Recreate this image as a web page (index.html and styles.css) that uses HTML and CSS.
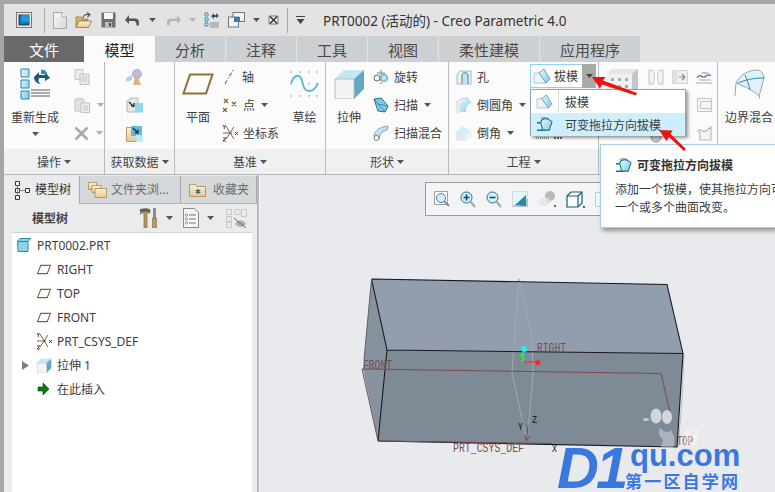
FILE: index.html
```html
<!DOCTYPE html>
<html lang="zh">
<head>
<meta charset="utf-8">
<title>PRT0002 - Creo Parametric 4.0</title>
<link rel="stylesheet" href="styles.css">
</head>
<body>
<svg class="defs" width="0" height="0" aria-hidden="true">
  <defs>
    <linearGradient id="gBlue" x1="0" y1="0" x2="1" y2="1"><stop offset="0" stop-color="#e8f7fc"/><stop offset="1" stop-color="#7ccbe6"/></linearGradient>
    <linearGradient id="gGrey" x1="0" y1="0" x2="1" y2="1"><stop offset="0" stop-color="#fafafa"/><stop offset="1" stop-color="#d4d6d8"/></linearGradient>
    <linearGradient id="gFolder" x1="0" y1="0" x2="0" y2="1"><stop offset="0" stop-color="#fdf2d4"/><stop offset="1" stop-color="#e8c98a"/></linearGradient>
    <symbol id="arrow" viewBox="0 0 9 5"><path d="M0 0h9L4.500 5z"/></symbol>
    <symbol id="plane" viewBox="0 0 16 12"><path d="M4.500 1.500H15L11.500 10.500H1z" fill="none" stroke="#7a6236" stroke-width="1.200"/></symbol>
    <symbol id="csys" viewBox="0 0 16 18">
      <path d="M4 2l8 13M12 3L4 15M1 9h9" stroke="#7a6236" stroke-width="1" fill="none"/>
      <path d="M1 1l1.300 2L3.600 1M2.300 3v2M13 8l3 3M16 8l-3 3M1 14h3l-3 3h3" stroke="#333" stroke-width=".9" fill="none"/>
    </symbol>
    <symbol id="extrude" viewBox="0 0 30 30">
      <path d="M10 1h20L20 10H1z" fill="#c5e6f3"/><path d="M30 1v19l-10 10V10z" fill="#5fa9c6"/>
      <path d="M1 10h19v20H1z" fill="#f3f3f3" stroke="#b8bcbe"/>
    </symbol>
    <symbol id="draft" viewBox="0 0 18 16">
      <path d="M1 5h9l3 10H1z" fill="#e9f6fb" stroke="#9fb7c2" stroke-width=".8"/>
      <path d="M6 5l5-4 6 10-4 4z" fill="url(#gBlue)" stroke="#5b8ba0" stroke-width=".8"/>
    </symbol>
    <symbol id="vdraft" viewBox="0 0 18 16">
      <path d="M1 6h6M1 14h9" stroke="#1c6f8f" stroke-width="1.600" fill="none"/>
      <path d="M5 6c0-4 6-5 9-3l3 2-3 9H7z" fill="url(#gBlue)" stroke="#1c6f8f" stroke-width="1.100"/>
      <path d="M5 1.500c3-1 7-1 9 1" stroke="#555" fill="none" stroke-width=".8"/>
    </symbol>
  </defs>
</svg>

<div class="app">
  <header class="titlebar">
    <svg class="qa-app" width="16" height="16" viewBox="0 0 16 16"><rect x=".5" y=".5" width="15" height="15" fill="#f0f0f0" stroke="#777"/><rect x="3" y="3" width="10" height="10" fill="#0c78c2" stroke="#333"/><rect x="5.500" y="3" width="7.500" height="7" fill="#1d9be0"/></svg>
    <span class="qa-sep first"></span>
    <svg width="14" height="17" viewBox="0 0 14 17"><path d="M.5.500h8.500l4.500 4.500v11.500H.5z" fill="url(#gGrey)" stroke="#a3a8ab"/><path d="M9 .5v4.500h4.500" fill="#fff" stroke="#a3a8ab"/></svg>
    <svg width="17" height="17" viewBox="0 0 17 17"><path d="M1 15V5h5l1 2h6v2H4L1 15z" fill="#d8b56c" stroke="#93763c" stroke-width=".8"/><path d="M1 15l3-6h12.500l-3 6.500H1z" fill="url(#gFolder)" stroke="#93763c" stroke-width=".8"/><path d="M8 6c0-3 3-4 6-3.500M12 .5l3 2-2.500 2.500" fill="none" stroke="#44606f" stroke-width="1.200"/></svg>
    <svg class="qa-save" width="15" height="16" viewBox="0 0 15 16"><path d="M.5.500h14v15H.5z" fill="#6b7074"/><path d="M3 1h9v6H3z" fill="#f6f6f6"/><path d="M4 10h7v5.500H4z" fill="#b9bcbf"/><path d="M8 11h2v3.500H8z" fill="#4a4e52"/></svg>
    <svg class="qa-undo" width="16" height="11" viewBox="0 0 16 11"><path d="M4 3.500h6a4 4 0 0 1 4 4v3h-2.500c0-3-.5-4.500-3-4.500H4V9L0 5l4-5z" fill="#555" /></svg>
    <svg class="qa-arrow" width="7" height="4" viewBox="0 0 9 5"><use href="#arrow" fill="#555"/></svg>
    <svg class="qa-undo" width="16" height="11" viewBox="0 0 16 11"><path d="M12 3.500H6a4 4 0 0 0-4 4v3h2.500c0-3 .5-4.500 3-4.500H12V9l4-4-4-5z" fill="#b3b5b7"/></svg>
    <svg class="qa-arrow" width="7" height="4" viewBox="0 0 9 5"><use href="#arrow" fill="#b3b5b7"/></svg>
    <svg class="qa-regen" width="16" height="16" viewBox="0 0 16 16"><path d="M1 1h3v3H1zM1 6h3v3H1zM1 11h3v3H1z" fill="#d8f1fa" stroke="#1f86ad" stroke-width=".9"/><path d="M6 11h9M6 13h9M6 15h9" stroke="#8b8e91"/><path d="M7 4l3-3v2h2V1l3 3-3 2V5h-2v2z" fill="#1b5f7d"/></svg>
    <svg class="qa-win" width="17" height="16" viewBox="0 0 17 16"><rect x="5" y=".5" width="11.500" height="9" fill="#f3f3f3" stroke="#777"/><rect x=".5" y="5" width="10" height="10" fill="#f3f3f3" stroke="#777"/><rect x="6" y="5" width="6" height="5" fill="#2c86b5"/></svg>
    <svg class="qa-arrow" width="7" height="4" viewBox="0 0 9 5"><use href="#arrow" fill="#555"/></svg>
    <svg class="qa-close" width="11" height="10" viewBox="0 0 11 10"><path d="M1 1h9v8H1z" fill="#f3f3f3" stroke="#777"/><path d="M2 1.500l7 7M9 1.500l-7 7" stroke="#333" stroke-width="1.500"/></svg>
    <span class="qa-sep"></span>
    <svg class="qa-more" width="9" height="8" viewBox="0 0 9 8"><path d="M0 0h9v1H0z M.5 3h8L4.500 8z" fill="#444"/></svg>
    <span class="title">PRT0002 (活动的) - Creo Parametric 4.0</span>
  </header>

  <nav class="tabs">
    <span class="tab tab-file">文件</span>
    <span class="tab tab-active">模型</span>
    <span class="tab">分析</span>
    <span class="tab">注释</span>
    <span class="tab">工具</span>
    <span class="tab">视图</span>
    <span class="tab tab-wide">柔性建模</span>
    <span class="tab tab-wide">应用程序</span>
  </nav>

  <section class="ribbon">
    <div class="group g-ops">
      <div class="group-body">
        <div class="big big-regen">
          <svg width="31" height="32" viewBox="0 0 31 32"><path d="M1 1h8v8H1zM1 12h8v8H1zM1 23h8v8H1z" fill="url(#gBlue)" stroke="#238bb2" stroke-width="1"/><path d="M11 22h19M11 25h19M11 28h19" stroke="#8e9194" stroke-width="1.500"/><path d="M14 9l5-5v3h6V4l5 6-5 3v-3h-6c0 1-2 4 2 6-4 0-7-3-7-7z" fill="#155c7b"/><path d="M21 2c3-1 6 1 6 4h-6z" fill="#2a8db4"/></svg>
          <span class="big-label">重新生成</span>
          <svg class="under-arrow" width="7" height="4" viewBox="0 0 9 5"><use href="#arrow" fill="#555"/></svg>
        </div>
        <div class="stack stack-ops">
          <div class="row"><svg width="16" height="16" viewBox="0 0 16 16"><path d="M1 .5h8v10H1z" fill="#ececec" stroke="#c2c4c6"/><path d="M6 5h9v10.500H6z" fill="#e9e9e9" stroke="#bfc1c3"/><path d="M8 8h5M8 10h5M8 12h5" stroke="#c2c4c6"/></svg></div>
          <div class="row"><svg width="16" height="16" viewBox="0 0 16 16"><path d="M1 2h9v12H1z" fill="#e2e2e2" stroke="#c2c4c6"/><path d="M3 .5h5v3H3z" fill="#d6d6d6"/><path d="M7 6h8.500v9.500H7z" fill="#eee" stroke="#bfc1c3"/><path d="M9 9h5M9 11h5M9 13h5" stroke="#c2c4c6"/></svg><svg class="r-arrow" width="7" height="4" viewBox="0 0 9 5"><use href="#arrow" fill="#aeb0b2"/></svg></div>
          <div class="row"><svg width="15" height="15" viewBox="0 0 15 15"><path d="M1.500 1.500l12 12M13.500 1.500l-12 12" stroke="#a8aaac" stroke-width="2.600"/></svg><svg class="r-arrow" width="7" height="4" viewBox="0 0 9 5"><use href="#arrow" fill="#aeb0b2"/></svg></div>
        </div>
      </div>
      <div class="group-foot">操作<svg width="7" height="4" viewBox="0 0 9 5"><use href="#arrow" fill="#555"/></svg></div>
    </div>

    <div class="group g-data">
      <div class="group-body">
        <div class="stack stack-data">
          <div class="row"><svg width="17" height="17" viewBox="0 0 17 17"><circle cx="11" cy="5" r="4.500" fill="#b9bce8" stroke="#8e92c4" stroke-width=".6"/><path d="M0 9l6-3v5l-6 2z" fill="#a6d9ee"/><path d="M10 3l5 13H7z" fill="#d9b77b"/></svg></div>
          <div class="row"><svg width="17" height="16" viewBox="0 0 17 16"><path d="M1 4l4-3h7v14H1z" fill="#e6e6e6" stroke="#a8abae" stroke-width=".8"/><path d="M9 6h8v9.500H9z" fill="#8ed7f0"/><path d="M3 5l5 5M5 9h3V6" stroke="#222" fill="none" stroke-width="1.200"/></svg></div>
          <div class="row"><svg width="17" height="17" viewBox="0 0 17 17"><path d="M.5 2.500h10v14H.5z" fill="url(#gFolder)" stroke="#a58a50" stroke-width=".8"/><path d="M5 1h11v10H5z" fill="#62b9da"/><path d="M10 10h7v6.500h-7z" fill="#bce8f6"/><path d="M7 3l5 5M8.500 8H12V4.500" stroke="#222" fill="none" stroke-width="1.200"/></svg></div>
        </div>
      </div>
      <div class="group-foot">获取数据<svg width="7" height="4" viewBox="0 0 9 5"><use href="#arrow" fill="#555"/></svg></div>
    </div>

    <div class="group g-datum">
      <div class="group-body">
        <div class="big big-plane">
          <svg width="32" height="22" viewBox="0 0 32 22"><path d="M8 1.500h22.500L24 20.500H1.500z" fill="none" stroke="#8f7039" stroke-width="2"/></svg>
          <span class="big-label">平面</span>
        </div>
        <div class="stack stack-datum">
          <div class="row"><svg class="ic-rw" width="15" height="16" viewBox="0 0 15 16"><path d="M3 15L11 1" stroke="#7d6b45" stroke-width="1.200" stroke-dasharray="4 2 1 2"/></svg><span>轴</span></div>
          <div class="row"><svg class="ic-rw" width="16" height="14" viewBox="0 0 16 14"><path d="M2 1l4 4M6 1L2 5M10 4l4 4M14 4l-4 4M1 10l4 4M5 10l-4 4" stroke="#7d5f2f" stroke-width="1.100"/></svg><span>点</span><svg class="r-arrow" width="7" height="4" viewBox="0 0 9 5"><use href="#arrow" fill="#555"/></svg></div>
          <div class="row"><svg class="ic-rw" width="16" height="18" viewBox="0 0 16 18"><use href="#csys"/></svg><span>坐标系</span></div>
        </div>
        <div class="big big-sketch">
          <svg width="29" height="28" viewBox="0 0 29 28"><g fill="#77797b"><circle cx="1" cy="2" r=".7"/><circle cx="10" cy="2" r=".7"/><circle cx="19" cy="2" r=".7"/><circle cx="27" cy="2" r=".7"/><circle cx="1" cy="14" r=".7"/><circle cx="19" cy="14" r=".7"/><circle cx="27" cy="14" r=".7"/><circle cx="1" cy="26" r=".7"/><circle cx="10" cy="26" r=".7"/><circle cx="19" cy="26" r=".7"/><circle cx="27" cy="26" r=".7"/></g><path d="M1 13c2-5 5-8 8-7 5 2 2 15 10 15 4 0 7-3 9-8" fill="none" stroke="#4fb8dc" stroke-width="1.800"/></svg>
          <span class="big-label">草绘</span>
        </div>
      </div>
      <div class="group-foot">基准<svg width="7" height="4" viewBox="0 0 9 5"><use href="#arrow" fill="#555"/></svg></div>
    </div>

    <div class="group g-shape">
      <div class="group-body">
        <div class="big big-extrude">
          <svg width="30" height="30" viewBox="0 0 30 30"><use href="#extrude"/></svg>
          <span class="big-label">拉伸</span>
        </div>
        <div class="stack stack-shape">
          <div class="row"><svg class="ic-rw" width="16" height="14" viewBox="0 0 16 14"><path d="M8 0v14" stroke="#777" stroke-dasharray="2 1"/><circle cx="4" cy="8" r="3" fill="#fff" stroke="#666"/><circle cx="11" cy="8" r="3.500" fill="#b9e3f2" stroke="#4f97b3"/><path d="M4 3h8" stroke="#777"/></svg><span>旋转</span></div>
          <div class="row"><svg class="ic-rw" width="16" height="16" viewBox="0 0 16 16"><path d="M1 2l7-1 7 8-3 6-7-1z" fill="#7fcbe5" stroke="#276f8d"/><path d="M1 2l4 5 7 8M5 7l10 2" stroke="#276f8d" fill="none" stroke-width=".7"/></svg><span>扫描</span><svg class="r-arrow" width="7" height="4" viewBox="0 0 9 5"><use href="#arrow" fill="#555"/></svg></div>
          <div class="row"><svg class="ic-rw" width="16" height="16" viewBox="0 0 16 16"><path d="M1 11C2 5 7 2 15 1l-1 4C9 6 7 9 6 14z" fill="url(#gBlue)" stroke="#7e8c93" stroke-width=".8"/><circle cx="3.500" cy="13" r="2.500" fill="#fff" stroke="#777"/></svg><span>扫描混合</span></div>
        </div>
      </div>
      <div class="group-foot">形状<svg width="7" height="4" viewBox="0 0 9 5"><use href="#arrow" fill="#555"/></svg></div>
    </div>

    <div class="group g-eng">
      <div class="group-body">
        <div class="stack stack-eng">
          <div class="row"><svg class="ic-rw" width="16" height="15" viewBox="0 0 16 15"><path d="M1 5l3-4h11v13H4l-3 0z" fill="#eef0f1" stroke="#9ea3a6" stroke-width=".8"/><path d="M6 14V5c0-3 6-3 6 0v9" fill="#bfe6f4" stroke="#3f87a3"/></svg><span>孔</span></div>
          <div class="row"><svg class="ic-rw" width="16" height="16" viewBox="0 0 16 16"><path d="M0 6h4v10H0z" fill="#e9e9e9"/><path d="M4 15V7C4 3 9 1 12 1l4 5c-4 0-6 3-6 9z" fill="url(#gBlue)" /><path d="M0 6c2-3 7-5 12-5" stroke="#c6c8ca" fill="none"/></svg><span>倒圆角</span><svg class="r-arrow" width="7" height="4" viewBox="0 0 9 5"><use href="#arrow" fill="#555"/></svg></div>
          <div class="row"><svg class="ic-rw" width="16" height="16" viewBox="0 0 16 16"><path d="M0 7h6v9H0z" fill="#e9e9e9"/><path d="M6 15V9l-6-2 7-6 9 6-6 2v7z" fill="#d2eef8"/><path d="M10 9l6-2v5l-6 3z" fill="#f2f2f2"/></svg><span>倒角</span><svg class="r-arrow" width="7" height="4" viewBox="0 0 9 5"><use href="#arrow" fill="#555"/></svg></div>
        </div>
        <div class="draft-wrap">
          <div class="draft-btn">
            <span class="draft-main"><svg width="18" height="16" viewBox="0 0 18 16"><use href="#draft"/></svg><span>拔模</span></span>
            <span class="draft-drop"><svg width="7" height="4" viewBox="0 0 9 5"><use href="#arrow" fill="#444"/></svg></span>
          </div>
          <svg class="hidden-row" width="30" height="6" viewBox="0 0 30 6"><path d="M2 3h14" stroke="#9a9c9e" stroke-width="2" stroke-dasharray="1 1"/><path d="M20 3h8" stroke="#666" stroke-width="2" stroke-dasharray="2 1"/></svg>
        </div>
      </div>
      <div class="group-foot">工程<svg width="7" height="4" viewBox="0 0 9 5"><use href="#arrow" fill="#555"/></svg></div>
    </div>

    <div class="group g-edit">
      <div class="group-body">
        <svg class="building" width="31" height="30" viewBox="0 0 31 30"><path d="M0 5l4-5h27v30H0z" fill="#e4e5e6"/><path d="M0 5h25v25H0z" fill="#f1f1f1"/><path d="M25 5l6-5v30h-6z" fill="#c4c6c8"/><path d="M4 9h3v3H4zM11 9h3v3h-3zM18 9h3v3h-3zM4 16h3v3H4zM11 16h3v3h-3zM18 16h3v3h-3z" fill="#a9abad"/></svg>
        <div class="mini-grid">
          <svg width="16" height="16" viewBox="0 0 16 16"><path d="M1 1h4c2 3 2 10 0 14H1zM15 1h-4c-2 3-2 10 0 14h4z" fill="#f2f2f2" stroke="#c2c4c6"/></svg>
          <svg width="16" height="14" viewBox="0 0 16 14"><path d="M.5.500h15v13H.5z" fill="#f0f0f0" stroke="#cfd1d3"/><path d="M.5.500h5v13h-5z" fill="#dfe0e1"/><path d="M7 7h5M10 4l3 3-3 3" stroke="#888" fill="none" stroke-width="1.100"/></svg>
          <svg width="16" height="15" viewBox="0 0 16 15"><path d="M0 13h16M3 10l12-0" stroke="#aaa"/><path d="M1 8c3-6 6 2 9-2 2-2 3 0 5-1" stroke="#7a5fb8" fill="none" stroke-width="1.300"/><path d="M5 4c3-3 5 0 8-1" stroke="#999" fill="none"/></svg>
          <i></i><i></i>
          <svg width="15" height="14" viewBox="0 0 15 14"><path d="M.5.500h14v13H.5zM3.500 3.500h11v7h-11z" fill="#f4f4f4" stroke="#c2c4c6"/></svg>
          <svg class="hidden-gear" width="12" height="12" viewBox="0 0 12 12"><circle cx="6" cy="6" r="5" fill="#c9cbcd" stroke="#888a8c"/></svg><i></i>
          <svg width="15" height="15" viewBox="0 0 15 15"><path d="M1 5c3-4 5 3 8 0 2-2 3-3 5-4v13H3V7z" fill="#f4f4f4" stroke="#b4b6b8" stroke-width="1.100"/></svg>
        </div>
      </div>
      <div class="group-foot"></div>
    </div>

    <div class="group g-surf">
      <div class="group-body">
        <div class="big big-surf">
          <svg width="31" height="30" viewBox="0 0 31 30"><path d="M2 14C6 6 14 1 23 1c4 0 6 3 7 7-1 6-3 12-5 19-5-5-13-9-23-13z" fill="#dff2f8" stroke="#9aa3a8"/><path d="M2 14l-1 13M25 27l1 3" stroke="#9aa3a8"/><path d="M11 6c2 5 4 10 5 15M4 14c7-3 15-5 26-5" stroke="#2a8db4" fill="none"/></svg>
          <span class="big-label">边界混合</span>
        </div>
      </div>
      <div class="group-foot"></div>
    </div>
  </section>

  <main class="workspace">
    <aside class="panel">
      <div class="panel-tabs">
        <div class="ptab ptab-active">
          <svg width="15" height="19" viewBox="0 0 15 19"><path d="M.5.500h4v4h-4zM.5 7.500h4v4h-4zM.5 14.500h4v4h-4zM10.500 7.500h4v4h-4z" fill="#fff" stroke="#333"/><path d="M2.500 4.500v10M4.500 9.500h6" stroke="#888"/></svg>
          <span>模型树</span>
        </div>
        <div class="ptab ptab-folders">
          <svg width="19" height="17" viewBox="0 0 19 17"><path d="M.5 1.500h8v7h-8z" fill="url(#gFolder)" stroke="#a58a50" stroke-width=".8"/><path d="M4 4.500h9v7H4z" fill="url(#gFolder)" stroke="#a58a50" stroke-width=".8"/><path d="M7 7.500h11.500v9H7z" fill="url(#gFolder)" stroke="#a58a50" stroke-width=".8"/></svg>
          <span>文件夹浏...</span>
        </div>
        <div class="ptab ptab-fav">
          <svg width="17" height="14" viewBox="0 0 17 14"><path d="M.5 1.500h6l1 2h9v10H.5z" fill="url(#gFolder)" stroke="#a58a50" stroke-width=".8"/><path d="M9 6v5M6.800 7.200l4.400 2.600M11.200 7.200l-4.400 2.600" stroke="#155c7b" stroke-width="1.100"/></svg>
          <span>收藏夹</span>
        </div>
      </div>
      <div class="panel-head">
        <span class="panel-title">模型树</span>
        <svg class="tool-ic" width="18" height="20" viewBox="0 0 18 20"><path d="M0 2c3-2 8-2 10 0v3H7v15H4V5H3L0 6z" fill="#b99a5e" stroke="#6c5a37" stroke-width=".6"/><path d="M0 1h10v3H0z" fill="#5e6266"/><path d="M13 0h3v10h-3z" fill="#888c90"/><path d="M12.500 10h4v10h-4z" fill="#c09c52" stroke="#6c5a37" stroke-width=".5"/></svg>
        <svg class="tool-arrow" width="7" height="4" viewBox="0 0 9 5"><use href="#arrow" fill="#555"/></svg>
        <svg class="tool-ic list-ic" width="16" height="20" viewBox="0 0 16 20"><path d="M.5.500h11l4 4v15H.5z" fill="#f6f6f6" stroke="#888a8c"/><path d="M6 7h7M6 11h7M6 15h7" stroke="#777"/><circle cx="3.500" cy="7" r="1.200" fill="none" stroke="#777" stroke-width=".7"/><circle cx="3.500" cy="11" r="1.200" fill="none" stroke="#777" stroke-width=".7"/><circle cx="3.500" cy="15" r="1.200" fill="none" stroke="#777" stroke-width=".7"/></svg>
        <svg class="tool-arrow" width="7" height="4" viewBox="0 0 9 5"><use href="#arrow" fill="#555"/></svg>
        <svg class="tool-ic eye-ic" width="21" height="19" viewBox="0 0 21 19"><path d="M.5.500h5v5h-5zM.5 7.500h5v5h-5zM.5 13.500h5v5h-5zM9 .5h5v5H9zM15.500.5h5v7h-5z" fill="none" stroke="#c6c8ca"/><path d="M9 15c3-5 8-5 11 0-3 4-8 4-11 0z" fill="#aeb0b2"/><path d="M8 9l12 10" stroke="#666" stroke-width="1"/></svg>
      </div>
      <ul class="tree">
        <li class="node node-root"><svg width="14" height="14" viewBox="0 0 14 14"><path d="M3 .5h10.500l-2.500 3v10H1l-.5-10z" fill="#8fd2ec" stroke="#2f86ab"/><path d="M.5 3.500H11" stroke="#2f86ab"/></svg><span>PRT0002.PRT</span></li>
        <li class="node"><svg width="15" height="11" viewBox="0 0 16 12"><use href="#plane"/></svg><span>RIGHT</span></li>
        <li class="node"><svg width="15" height="11" viewBox="0 0 16 12"><use href="#plane"/></svg><span>TOP</span></li>
        <li class="node"><svg width="15" height="11" viewBox="0 0 16 12"><use href="#plane"/></svg><span>FRONT</span></li>
        <li class="node"><svg width="16" height="18" viewBox="0 0 16 18"><use href="#csys"/></svg><span>PRT_CSYS_DEF</span></li>
        <li class="node"><svg class="expander" width="7" height="9" viewBox="0 0 7 9"><path d="M0 0l7 4.500L0 9z" fill="#7d7f81"/></svg><svg width="16" height="15" viewBox="0 0 30 30"><use href="#extrude"/></svg><span>拉伸 1</span></li>
        <li class="node"><svg width="12" height="12" viewBox="0 0 12 12"><path d="M0 4h5V0l6 6-6 6V8H0z" fill="#0b7a12" stroke="#0a3d0a" stroke-width=".6"/></svg><span>在此插入</span></li>
      </ul>
    </aside>

    <div class="splitter"></div>

    <div class="canvas">
      <svg class="model" viewBox="261 176 514 316" width="514" height="316">
        <path d="M371.500 279L667 284.500 683 353.500 387 350z" fill="#929eae"/>
        <path d="M387 350L683 353.500 677 447 378 441z" fill="#7f8a97"/>
        <path d="M371.500 279L387 350 385 370 378 441 363 369z" fill="#87929f"/>
        <path d="M519 279L512 373 526 438M519 279L532 337 533 373 530 410 527 440" fill="none" stroke="#a7a9ac" stroke-width="1"/>
        <path d="M684 354L682 400 678 447" fill="none" stroke="#b8bbbf" stroke-width="1"/>
        <path d="M371.500 279L667 284.500 683 353.500 677 447 378 441M371.500 279L387 350 683 353.500M387 350L385 370 378 441" fill="none" stroke="#15181c" stroke-width="1.100"/>
        <path d="M371.500 279L364 360" fill="none" stroke="#5d6670" stroke-width="1"/>
        <path d="M362 369L661 373.500 670 412M362 369L378 441 552 443.500" fill="none" stroke="#7b4a4e" stroke-width="1"/>
        <path d="M528 425l-1.500 16-2-6M526.500 441l3-5" fill="none" stroke="#7b4a4e" stroke-width="1"/>
        <path d="M524 349l-1 13" stroke="#1ee" stroke-width="1.500"/>
        <path d="M523 362h15" stroke="#f22" stroke-width="1"/>
        <circle cx="524" cy="349" r="3" fill="#1cf0f0"/>
        <circle cx="522" cy="355" r="2.200" fill="#2ee62e"/>
        <path d="M523 354v8" stroke="#2ee62e" stroke-width="1"/>
        <circle cx="538" cy="362.500" r="2.500" fill="#f22"/>
        <text class="lbl" x="537" y="352" textLength="29" lengthAdjust="spacingAndGlyphs">RIGHT</text>
        <text class="lbl" x="363" y="369" textLength="29" lengthAdjust="spacingAndGlyphs">FRONT</text>
        <text class="lbl" x="453" y="452" textLength="71" lengthAdjust="spacingAndGlyphs">PRT_CSYS_DEF</text>
        <text class="lbl" x="677" y="445" textLength="16" lengthAdjust="spacingAndGlyphs">TOP</text>
        <text class="axis" x="532" y="423" textLength="5" lengthAdjust="spacingAndGlyphs">Z</text>
        <text class="axis" x="518" y="430" textLength="5" lengthAdjust="spacingAndGlyphs">Y</text>
        <text class="axis" x="552" y="452" textLength="5" lengthAdjust="spacingAndGlyphs">X</text>
        <g fill="#fff">
          <ellipse cx="656" cy="416" rx="5.500" ry="7.500" opacity=".65"/>
          <ellipse cx="667" cy="417" rx="5" ry="7" opacity=".65"/>
          <ellipse cx="646" cy="419.500" rx="3" ry="1.500" opacity=".55"/>
          <path d="M660 428c-3 5 0 9 3 12l-2 7 12 1c2-6 2-11-2-18-2 3-6 3-11-2z" opacity=".35"/>
        </g>
        <text class="hao" x="684" y="443">好</text>
      </svg>
    </div>
  </main>

  <div class="floatbar">
    <svg width="16" height="16" viewBox="0 0 16 16"><path d="M.5.500h13v13H.5z" fill="#fff" stroke="#a0a2a4"/><circle cx="7" cy="7" r="4.500" fill="#d2eef8" stroke="#4e7e91"/><path d="M10 10l5 5" stroke="#8a8c8e" stroke-width="2"/></svg>
    <svg width="16" height="17" viewBox="0 0 16 17"><circle cx="6.500" cy="6.500" r="5.500" fill="#d2eef8" stroke="#2b6e8a"/><path d="M3.500 6.500h6M6.500 3.500v6" stroke="#0f4f6b" stroke-width="1.600"/><path d="M10 10l5 6" stroke="#a7a9ab" stroke-width="2.200"/></svg>
    <svg width="16" height="17" viewBox="0 0 16 17"><circle cx="6.500" cy="6.500" r="5.500" fill="#d2eef8" stroke="#2b6e8a"/><path d="M3.500 6.500h6" stroke="#0f4f6b" stroke-width="1.600"/><path d="M10 10l5 6" stroke="#a7a9ab" stroke-width="2.200"/></svg>
    <svg width="16" height="16" viewBox="0 0 16 16"><path d="M0 0h16v16H0z" fill="#bfc2c5"/><path d="M.5 .5h15v7L.5 15z" fill="#e8f6fb"/><path d="M3 14L14 4v11z" fill="#2b88ad"/></svg>
    <svg class="wide" width="18" height="16" viewBox="0 0 18 16"><circle cx="12" cy="5" r="5" fill="#b6b8ba"/><path d="M1 12l8-6 4 4-6 5z" fill="#d5d7d9"/><circle cx="5" cy="11" r="4" fill="#e8e8e8"/><path d="M16 14h2v2h-2z" fill="#666"/></svg>
    <svg class="wide" width="19" height="17" viewBox="0 0 19 17"><path d="M1 5l4-4h11v11l-4 4H1z" fill="#fff" stroke="#1c5a75" stroke-width="1.200"/><path d="M1 5h11v11M12 5l4-4" fill="none" stroke="#1c5a75" stroke-width="1.200"/><path d="M17 15h2v2h-2z" fill="#666"/></svg>
    <svg width="14" height="15" viewBox="0 0 14 15"><path d="M.5.500h13v14H.5z" fill="#f0f8fb" stroke="#a8d0e0"/></svg>
  </div>

  <div class="menu">
    <div class="menu-item"><span class="menu-ic"><svg width="17" height="15" viewBox="0 0 18 16"><use href="#draft"/></svg></span><span>拔模</span></div>
    <div class="menu-item menu-hot"><span class="menu-ic"><svg width="17" height="15" viewBox="0 0 18 16"><use href="#vdraft"/></svg></span><span>可变拖拉方向拔模</span></div>
  </div>

  <div class="tip">
    <div class="tip-title"><svg width="17" height="15" viewBox="0 0 18 16"><use href="#vdraft"/></svg><span>可变拖拉方向拔模</span></div>
    <p class="tip-text">添加一个拔模，使其拖拉方向可<br>一个或多个曲面改变。</p>
  </div>

  <svg class="arrows" width="775" height="492" viewBox="0 0 775 492">
    <path d="M637 93L603 80.500l2.500-3.500L592 77l8 11.500 2-4 34 11z" fill="#ee1111"/>
    <path d="M684 151l-15-14-2.500 4-7.500-11 13.500.5-2 3.500 15.500 15z" fill="#ee1111"/>
  </svg>

  <div class="mark">
    <span class="mark-d1">D1</span>
    <div class="mark-right">
      <span class="mark-qu">qu.com</span>
      <span class="mark-cn">第一区自学网</span>
    </div>
  </div>
</div>
</body>
</html>
```

FILE: styles.css
```css
* { box-sizing: border-box; }
html, body { margin: 0; padding: 0; }
body { width: 775px; height: 492px; overflow: hidden; background: #e9eaee; font-family: "Noto Sans", "Noto Sans CJK SC", sans-serif; font-size: 12px; color: #3d3d3d; }
svg { display: block; flex: none; }
.defs { position: absolute; }
.app { position: relative; width: 775px; height: 492px; overflow: hidden; display: flex; flex-direction: column; border-top: 4px solid #a6a6a6; border-left: 4px solid #a6a6a6; background: #e9eaee; }

/* title bar */
.titlebar { height: 32px; flex: none; display: flex; align-items: center; background: #e3e3e3; padding-left: 12px; }
.titlebar > svg { margin-right: 8px; }
.titlebar > .qa-app { margin-right: 12px; }
.titlebar > .qa-save { margin-right: 8px; margin-left: 1px; }
.qa-sep { width: 1px; height: 25px; background: #a9abad; margin-right: 8px; }
.qa-undo { margin-left: 1px; }
.title { margin-left: 10px; font-size: 13.5px; color: #333; white-space: nowrap; }

/* tabs */
.tabs { height: 26px; flex: none; display: flex; background: #e3e3e3; gap: 1px; }
.tab { width: 70px; display: flex; align-items: center; justify-content: center; background: #cdd0d3; font-size: 15px; color: #4a4a4a; }
.tab-wide { width: 100px; }
.tab-file { width: 80px; margin-right: -1px; background: #696969; color: #fff; }
.tab-active { width: 71px; margin-right: -1px; background: #fbfbfb; color: #222; }

/* ribbon */
.ribbon { height: 113px; flex: none; display: flex; background: #fbfbfb; border-bottom: 1px solid #b5b7b9; }
.group { display: flex; flex-direction: column; border-right: 1px solid #b9bbbd; }
.group-body { flex: 1; display: flex; padding-top: 1px; }
.group-foot { height: 25px; flex: none; background: #eff0f1; display: flex; align-items: center; justify-content: center; gap: 3px; font-size: 12px; color: #444; }
.g-ops { width: 101px; }
.g-data { width: 70px; }
.g-datum { width: 151px; }
.g-shape { width: 123px; }
.g-eng { width: 150px; }
.g-edit { width: 119px; }
.g-surf { flex: 1; border-right: 0; }

.big { display: flex; flex-direction: column; align-items: center; position: relative; height: 86px; }
.big-label { position: absolute; top: 46px; white-space: nowrap; font-size: 12px; line-height: 18px; }
.big-regen { width: 48px; margin: 0 7px; padding-top: 5px; }
.under-arrow { position: absolute; top: 69px; }
.big-plane { width: 32px; margin: 0 8px 0 7px; padding-top: 10px; }
.big-sketch { width: 29px; margin-left: 10px; padding-top: 7px; }
.big-extrude { width: 30px; margin-left: 8px; padding-top: 6px; }
.big-surf { width: 48px; margin-left: 7px; padding-top: 6px; }

.stack { display: flex; flex-direction: column; }
.row { height: 28px; display: flex; align-items: center; white-space: nowrap; }
.ic-rw { margin-right: 5px; }
.r-arrow { margin-left: 6px; }
.stack-ops { margin-left: 8px; }
.stack-ops .r-arrow { margin-left: 7px; }
.stack-data { margin-left: 21px; }
.stack-datum { width: 58px; }
.stack-shape { margin-left: 9px; }
.stack-eng { margin-left: 7px; width: 74px; }

.draft-wrap { padding-top: 1px; }
.draft-btn { width: 66px; height: 24px; display: flex; border: 1px solid #8fd3ee; background: #fff; }
.draft-main { flex: 1; display: flex; align-items: center; gap: 3px; padding-left: 2px; font-size: 12px; }
.draft-drop { width: 14px; background: #a9a9a9; display: flex; align-items: center; justify-content: center; margin: -1px -1px -1px 0; }
.hidden-row { margin: 47px 0 0 4px; }

.building { margin: 6px 0 0 8px; }
.mini-grid { margin-left: 10px; display: grid; grid-template-columns: 16px 16px 16px; column-gap: 8px; grid-auto-rows: 28px; align-items: center; justify-items: center; width: 64px; }
.hidden-gear { margin-top: 8px; }

/* workspace */
.workspace { flex: 1; display: flex; min-height: 0; }
.panel { width: 253px; flex: none; display: flex; flex-direction: column; background: #eaebed; }
.panel-tabs { height: 28px; flex: none; display: flex; margin-top: 1px; border-bottom: 1px solid #b5b7b9; }
.ptab { display: flex; align-items: center; background: #d6d9db; border-right: 1px solid #a9abad; color: #6a6a6a; white-space: nowrap; }
.ptab span { position: relative; top: -1px; }
.ptab-active { width: 76px; padding-left: 11px; gap: 5px; background: #eaebed; color: #333; margin-bottom: -1px; }
.ptab-folders { width: 101px; padding-left: 8px; gap: 4px; }
.ptab-fav { width: 76px; padding-left: 8px; gap: 7px; }
.panel-head { height: 28px; flex: none; display: flex; align-items: center; padding-left: 28px; }
.panel-title { width: 108px; font-weight: 700; color: #444; }
.tool-arrow { margin: 0 10px 0 8px; }
.eye-ic { margin-left: 2px; }
.tree { flex: 1; margin: 0 5px 0 8px; padding: 0 0 0 24px; list-style: none; background: #fff; border-top: 1px solid #d0d2d4; }
.node { position: relative; height: 24px; display: flex; align-items: center; gap: 5px; }
.node > svg:first-child { width: 16px; }
.node-root { margin-left: -19px; gap: 6px; }
.node-root > svg:first-child { width: 14px; }
.expander { position: absolute; left: -14px; top: 8px; width: 7px; }
.node > svg.expander:first-child { width: 7px; }
.splitter { width: 3px; flex: none; background: #b7b9bb; border-right: 1px solid #f4f4f4; }
.canvas { flex: 1; min-width: 0; background: #e9eaee; overflow: hidden; }
.model { width: 514px; height: 316px; margin: 1px 0 0 1px; }
.lbl { font: 12px "Liberation Mono", monospace; fill: #7b4a4e; }
.axis { font: 11px "Liberation Mono", monospace; fill: #111; }
.hao { font: 700 16px "Noto Sans CJK SC", sans-serif; fill: #fff; opacity: .45; }

/* overlays */
.floatbar { position: absolute; left: 421px; top: 178px; width: 176px; height: 34px; padding-left: 8px; display: flex; align-items: center; gap: 10px; background: #f3f4f5; border: 1px solid #9a9c9e; }
.menu { position: absolute; left: 526px; top: 85px; width: 156px; height: 47px; background: #fff; border: 1px solid #8fa2ad; box-shadow: 2px 2px 3px rgba(0,0,0,.4); }
.menu-item { height: 23px; display: flex; align-items: center; color: #3d3d3d; }
.menu-ic { width: 28px; height: 100%; display: flex; align-items: center; justify-content: center; border-right: 1px solid #d8dadc; margin-right: 6px; }
.menu-hot { background: #cdeefb; }
.menu-hot .menu-ic { border-right-color: transparent; }
.tip { position: absolute; left: 596px; top: 140px; width: 175px; height: 84px; padding: 11px 0 0 14px; background: #fff; border: 1px solid #a8d0e0; border-right: 0; box-shadow: 2px 3px 4px rgba(0,0,0,.35); overflow: hidden; }
.tip-title { display: flex; align-items: center; gap: 5px; font-weight: 700; color: #333; }
.tip-text { margin: 7px 0 0; line-height: 18px; white-space: nowrap; color: #3d3d3d; }
.arrows { position: absolute; left: -4px; top: -4px; pointer-events: none; }
.mark { position: absolute; left: 553px; top: 442px; display: flex; color: #3a78e0; font-family: "Liberation Sans", sans-serif; font-weight: 700; }
.mark-d1 { width: 68px; flex: none; font-size: 58px; line-height: 44px; font-style: italic; letter-spacing: -3px; }
.mark-right { display: flex; flex-direction: column; }
.mark-qu { font-size: 31px; line-height: 20px; margin-left: 5px; }
.mark-cn { margin-top: 5px; font: 700 17px/20px "Noto Sans CJK SC", sans-serif; letter-spacing: 2.200px; }
```
